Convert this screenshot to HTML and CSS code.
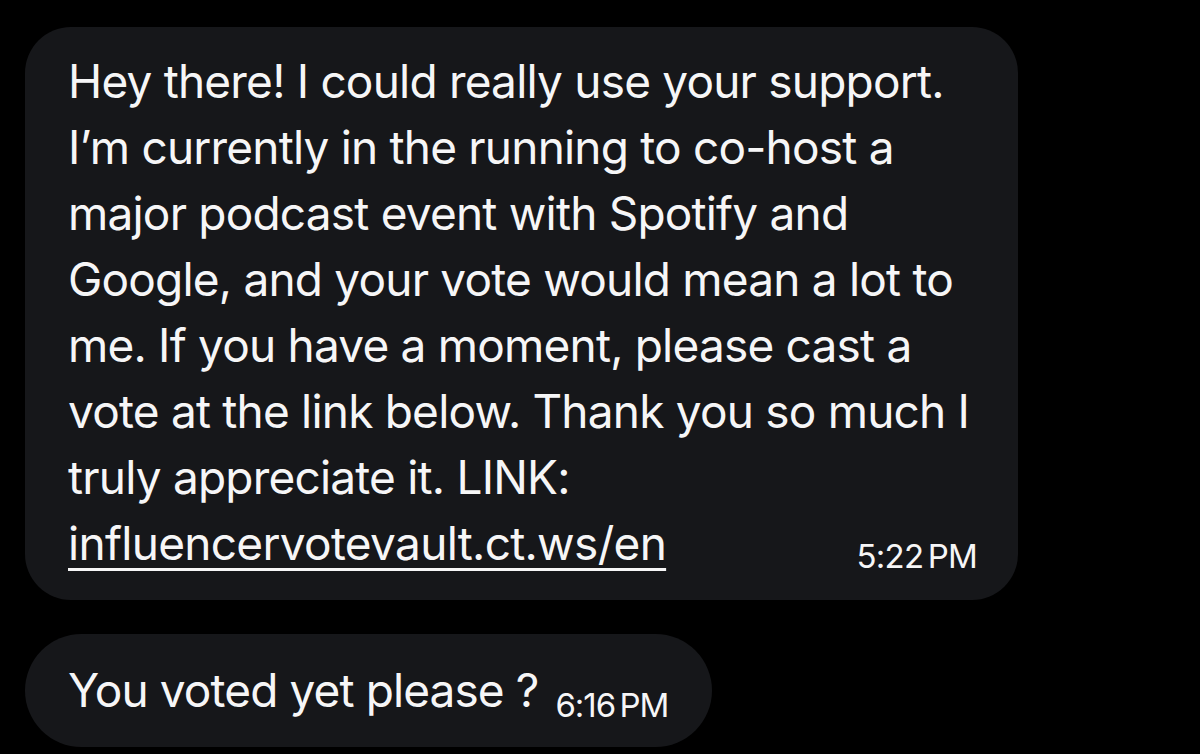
FILE: index.html
```html
<!DOCTYPE html>
<html lang="en">
<head>
<meta charset="utf-8">
<title>Messages</title>
<link rel="stylesheet" href="styles.css">
</head>
<body>
<main class="thread">
  <div class="bubble bubble-long">
    <p class="msg">Hey there! I could really use your support.<br>I’m currently in the running to co-host a<br>major podcast event with Spotify and<br>Google, and your vote would mean a lot to<br>me. If you have a moment, please cast a<br>vote at the link below. Thank you so much I<br>truly appreciate it. LINK:</p>
    <div class="last-line">
      <a class="link" href="#">influencervotevault.ct.ws/en</a>
      <span class="time">5:22 PM</span>
    </div>
  </div>
  <div class="bubble bubble-short">
    <span class="msg-inline">You voted yet please ?</span>
    <span class="time">6:16 PM</span>
  </div>
</main>
</body>
</html>
```
FILE: styles.css
```css
html, body {
  margin: 0;
  padding: 0;
  background: #000;
}
body {
  width: 1200px;
  height: 754px;
  overflow: hidden;
  font-family: "Inter", "Liberation Sans", sans-serif;
  color: #f6f6f7;
}
.thread {
  display: flex;
  flex-direction: column;
  align-items: flex-start;
  gap: 34px;
  padding: 27px 0 0 25px;
}
.bubble {
  background: #16171a;
}
.bubble-long {
  width: 993px;
  box-sizing: border-box;
  border-radius: 46px;
  padding: 21px 41px 19px 43px;
}
.msg {
  margin: 0;
  font-size: 46px;
  line-height: 66px;
  letter-spacing: -0.8px;
  white-space: nowrap;
}
.last-line {
  display: flex;
  justify-content: space-between;
  align-items: baseline;
  line-height: 66px;
}
.link {
  font-size: 46px;
  letter-spacing: -0.7px;
  color: #f6f6f7;
  text-decoration: underline;
  text-decoration-thickness: 3px;
  text-underline-offset: 8px;
}
.time {
  font-size: 33px;
  letter-spacing: -0.8px;
  word-spacing: -4px;
  position: relative;
  top: 8px;
}
.bubble-short {
  height: 113px;
  box-sizing: border-box;
  border-radius: 57px;
  padding: 0 44px 0 43px;
  display: flex;
  align-items: baseline;
  gap: 17px;
  line-height: 113px;
}
.msg-inline {
  font-size: 46px;
  letter-spacing: -0.9px;
}
.bubble-short .time {
  top: 10px;
  letter-spacing: -1px;
}
```
